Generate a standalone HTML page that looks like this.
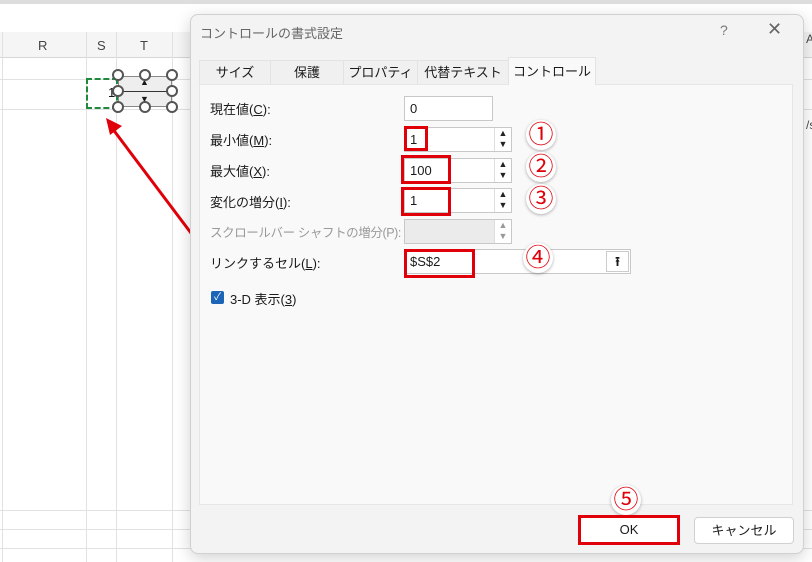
<!DOCTYPE html>
<html><head><meta charset="utf-8"><style>
*{margin:0;padding:0;box-sizing:border-box}
body{width:812px;height:562px;background:#fff;position:relative;overflow:hidden;font-family:"Liberation Sans","Noto Sans CJK JP",sans-serif;font-size:13px;color:#1a1a1a}
.a{position:absolute}
.vl{position:absolute;top:32px;bottom:0;width:1px;background:#e1e1e1}
.hl{position:absolute;left:0;right:0;height:1px;background:#e1e1e1}
.tab{position:absolute;top:60px;height:24px;border:1px solid #e3e3e3;border-bottom:none;background:#f0f0f0;text-align:center;line-height:23px;font-size:13px}
.lbl{position:absolute;left:210px;font-size:13px}
.box{position:absolute;background:#fff;border:1px solid #c8c8c8;height:25px;font-size:13px;line-height:23px;padding-left:5px}
.spin{position:absolute;width:17px;height:23px;border-left:1px solid #ddd;font-size:9px;line-height:11px;text-align:center;color:#222}
.red{position:absolute;border:3px solid #e0000a}
.circ{position:absolute;width:30px;height:30px;border-radius:50%;background:#fff;color:#e0000a;font-size:25px;line-height:30px;text-align:center;box-shadow:0 1px 3px rgba(0,0,0,.3)}
.h{position:absolute;width:12px;height:12px;border:2px solid #555;border-radius:50%;background:#fff}
</style></head><body>
<div class="a" style="left:0;top:0;width:812px;height:4px;background:#ddd"></div>
<div class="a" style="left:0;top:32px;width:812px;height:26px;background:#f5f5f5;border-bottom:1px solid #d6d6d6"></div>
<div class="vl" style="left:2px"></div><div class="vl" style="left:86px"></div><div class="vl" style="left:116px"></div><div class="vl" style="left:172px"></div>
<div class="a" style="left:38px;top:38px;color:#444">R</div>
<div class="a" style="left:97px;top:38px;color:#444">S</div>
<div class="a" style="left:140px;top:38px;color:#444">T</div>
<div class="hl" style="top:79px"></div><div class="hl" style="top:109px"></div>
<div class="hl" style="top:510px"></div><div class="hl" style="top:529px"></div><div class="hl" style="top:548px"></div>
<div class="a" style="left:86px;top:78px;width:32px;height:31px;border:2px dashed #1e8a3e"></div>
<div class="a" style="left:108px;top:85px">1</div>
<div class="a" style="left:118px;top:76px;width:54px;height:31px;background:#eee;border:1px solid #888"></div>
<div class="a" style="left:118px;top:91px;width:54px;height:1px;background:#333"></div>
<div class="a" style="left:140px;top:77px;font-size:9px">▲</div>
<div class="a" style="left:140px;top:94px;font-size:9px">▼</div>
<div class="h" style="left:112px;top:69px"></div><div class="h" style="left:139px;top:69px"></div><div class="h" style="left:166px;top:69px"></div>
<div class="h" style="left:112px;top:85px"></div><div class="h" style="left:166px;top:85px"></div>
<div class="h" style="left:112px;top:101px"></div><div class="h" style="left:139px;top:101px"></div><div class="h" style="left:166px;top:101px"></div>
<svg class="a" style="left:0;top:0" width="812" height="562"><line x1="200" y1="245" x2="112" y2="128" stroke="#e0000a" stroke-width="3"/><polygon points="106,118 122,126 110,135" fill="#e0000a"/></svg>
<div class="a" style="left:190px;top:14px;width:614px;height:540px;background:#f3f3f3;border:1px solid #d0d0d0;border-radius:8px;box-shadow:0 4px 16px rgba(0,0,0,.18)"></div>
<div class="a" style="left:200px;top:23px;color:#666;font-size:13px">コントロールの書式設定</div>
<div class="a" style="left:720px;top:22px;color:#777;font-size:14px">?</div>
<div class="a" style="left:767px;top:19px;color:#666;font-size:18px">✕</div>
<div class="a" style="left:199px;top:84px;width:594px;height:421px;background:#f9f9f9;border:1px solid #e6e6e6"></div>
<div class="tab" style="left:199px;width:72px">サイズ</div>
<div class="tab" style="left:270px;width:74px">保護</div>
<div class="tab" style="left:343px;width:75px">プロパティ</div>
<div class="tab" style="left:417px;width:92px">代替テキスト</div>
<div class="tab" style="left:508px;top:57px;height:28px;width:88px;background:#f9f9f9;line-height:28px">コントロール</div>
<div class="lbl" style="top:99px">現在値(<u>C</u>):</div>
<div class="lbl" style="top:130px">最小値(<u>M</u>):</div>
<div class="lbl" style="top:161px">最大値(<u>X</u>):</div>
<div class="lbl" style="top:192px">変化の増分(<u>I</u>):</div>
<div class="lbl" style="top:222px;color:#9a9a9a;font-size:12.5px;letter-spacing:-0.4px">スクロールバー シャフトの増分(P):</div>
<div class="lbl" style="top:253px">リンクするセル(<u>L</u>):</div>
<div class="box" style="left:404px;top:96px;width:89px">0</div>
<div class="box" style="left:404px;top:127px;width:108px">1<div class="spin" style="left:89px;top:0">▲<br>▼</div></div>
<div class="box" style="left:404px;top:158px;width:108px">100<div class="spin" style="left:89px;top:0">▲<br>▼</div></div>
<div class="box" style="left:404px;top:188px;width:108px">1<div class="spin" style="left:89px;top:0">▲<br>▼</div></div>
<div class="box" style="left:404px;top:219px;width:108px;background:#ebebeb"><div class="spin" style="left:89px;top:0;background:#fff;color:#999">▲<br>▼</div></div>
<div class="box" style="left:404px;top:249px;width:227px">$S$2<div class="a" style="left:201px;top:1px;width:23px;height:21px;border:1px solid #ccc;text-align:center;line-height:20px;font-weight:bold">⭱</div></div>
<div class="red" style="left:404px;top:126px;width:24px;height:25px"></div>
<div class="red" style="left:401px;top:155px;width:50px;height:29px"></div>
<div class="red" style="left:401px;top:187px;width:50px;height:29px"></div>
<div class="red" style="left:404px;top:249px;width:71px;height:29px"></div>
<div class="circ" style="left:526px;top:120px">①</div>
<div class="circ" style="left:526px;top:152px">②</div>
<div class="circ" style="left:526px;top:184px">③</div>
<div class="circ" style="left:523px;top:243px">④</div>
<div class="circ" style="left:611px;top:485px">⑤</div>
<div class="a" style="left:211px;top:291px;width:13px;height:13px;background:#1c64b8;border-radius:2px;color:#fff;font-size:10px;line-height:13px;text-align:center">✓</div>
<div class="lbl" style="left:230px;top:289px">3-D 表示(<u>3</u>)</div>
<div class="a" style="left:578px;top:515px;width:102px;height:30px;background:#fff;border:3px solid #e0000a;text-align:center;line-height:24px">OK</div>
<div class="a" style="left:694px;top:517px;width:100px;height:27px;background:#fff;border:1px solid #d0d0d0;border-radius:4px;text-align:center;line-height:25px">キャンセル</div>
<div class="a" style="left:806px;top:32px;font-size:12px;color:#444">A</div>
<div class="a" style="left:806px;top:118px;font-size:12px;color:#444">/s</div>
</body></html>
